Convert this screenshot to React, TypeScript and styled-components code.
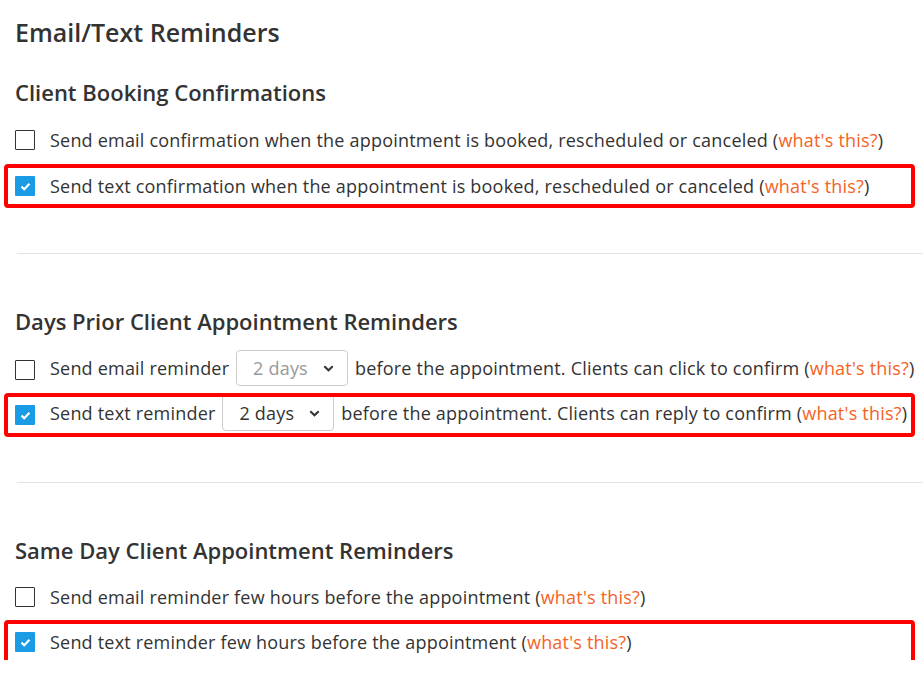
import styled, { createGlobalStyle } from "styled-components"

const GlobalStyle = createGlobalStyle`
  body {
    margin: 0;
    background: #ffffff;
    font-family: "Open Sans", "Liberation Sans", sans-serif;
    color: #333333;
  }
`

const Page = styled.div`
  padding: 17px 0 0 15px;
`

const Title = styled.h1`
  margin: 0;
  font-size: 25px;
  line-height: 30px;
  font-weight: 600;
  color: #333;
`

const Section = styled.section<{ $gap?: number }>`
  display: flex;
  flex-direction: column;
  gap: ${(p) => p.$gap ?? 10}px;
`

const Heading = styled.h2<{ $after?: number }>`
  margin: 0 0 ${(p) => p.$after ?? 6}px;
  font-size: 22px;
  line-height: 28px;
  font-weight: 600;
  color: #333;
`

const Divider = styled.hr`
  border: 0;
  border-top: 1px solid #e3e3e3;
  margin: 49px 0 53px 2px;
`

const Row = styled.div<{ $highlight?: boolean }>`
  position: relative;
  display: flex;
  align-items: center;
  height: 36px;
  gap: 15px;
  font-size: 18px;
  letter-spacing: 0.2px;
  color: #333;

  &::before {
    content: ${(p) => (p.$highlight ? `""` : "none")};
    position: absolute;
    left: -11px;
    right: 8px;
    top: -4px;
    bottom: -4px;
    border: 4px solid #ff0000;
    border-radius: 4px;
    pointer-events: none;
  }
`

const Box = styled.span<{ $checked?: boolean }>`
  flex: none;
  width: 20px;
  height: 20px;
  box-sizing: border-box;
  border: ${(p) => (p.$checked ? "none" : "1.5px solid #333")};
  background: ${(p) => (p.$checked ? "#1a9be6" : "#fff")};
  border-radius: 1px;
  display: flex;
  align-items: center;
  justify-content: center;
`

const Label = styled.span`
  white-space: nowrap;
`

const Link = styled.a`
  color: #f5631f;
  text-decoration: none;
`

const Select = styled.span<{ $muted?: boolean }>`
  display: inline-flex;
  align-items: center;
  justify-content: space-between;
  vertical-align: middle;
  box-sizing: border-box;
  width: 112px;
  height: 36px;
  margin: -4px 2px 0;
  padding: 0 13px 0 16px;
  border: 1px solid #cccccc;
  border-radius: 4px;
  color: ${(p) => (p.$muted ? "#999999" : "#333333")};
`

const Checkbox = ({ checked }: { checked?: boolean }) => (
  <Box $checked={checked}>
    {checked && (
      <svg width="11" height="9" viewBox="0 0 11 9">
        <path
          d="M1.5 4.6 L4.2 7.2 L9.5 1.8"
          fill="none"
          stroke="#fff"
          strokeWidth="2.2"
        />
      </svg>
    )}
  </Box>
)

const Chevron = () => (
  <svg width="11" height="7" viewBox="0 0 11 7">
    <path
      d="M1.3 1.3 L5.5 5.3 L9.7 1.3"
      fill="none"
      stroke="#333"
      strokeWidth="2"
    />
  </svg>
)

const DaysSelect = ({ muted }: { muted?: boolean }) => (
  <Select $muted={muted}>
    2 days
    <Chevron />
  </Select>
)

const WhatsThis = () => (
  <>
    {" "}
    (<Link href="#">what's this?</Link>)
  </>
)

export default function App() {
  return (
    <Page>
      <GlobalStyle />
      <Title>Email/Text Reminders</Title>

      <Section style={{ marginTop: 31 }}>
        <Heading>Client Booking Confirmations</Heading>
        <Row>
          <Checkbox />
          <Label>
            Send email confirmation when the appointment is booked, rescheduled
            or canceled
            <WhatsThis />
          </Label>
        </Row>
        <Row $highlight>
          <Checkbox checked />
          <Label>
            Send text confirmation when the appointment is booked, rescheduled
            or canceled
            <WhatsThis />
          </Label>
        </Row>
      </Section>

      <Divider />

      <Section $gap={9}>
        <Heading $after={8}>Days Prior Client Appointment Reminders</Heading>
        <Row>
          <Checkbox />
          <Label>
            Send email reminder <DaysSelect muted /> before the appointment.
            Clients can click to confirm
            <WhatsThis />
          </Label>
        </Row>
        <Row $highlight>
          <Checkbox checked />
          <Label>
            Send text reminder <DaysSelect /> before the appointment. Clients
            can reply to confirm
            <WhatsThis />
          </Label>
        </Row>
      </Section>

      <Divider />

      <Section $gap={9}>
        <Heading>Same Day Client Appointment Reminders</Heading>
        <Row>
          <Checkbox />
          <Label>
            Send email reminder few hours before the appointment
            <WhatsThis />
          </Label>
        </Row>
        <Row $highlight>
          <Checkbox checked />
          <Label>
            Send text reminder few hours before the appointment
            <WhatsThis />
          </Label>
        </Row>
      </Section>
    </Page>
  )
}
